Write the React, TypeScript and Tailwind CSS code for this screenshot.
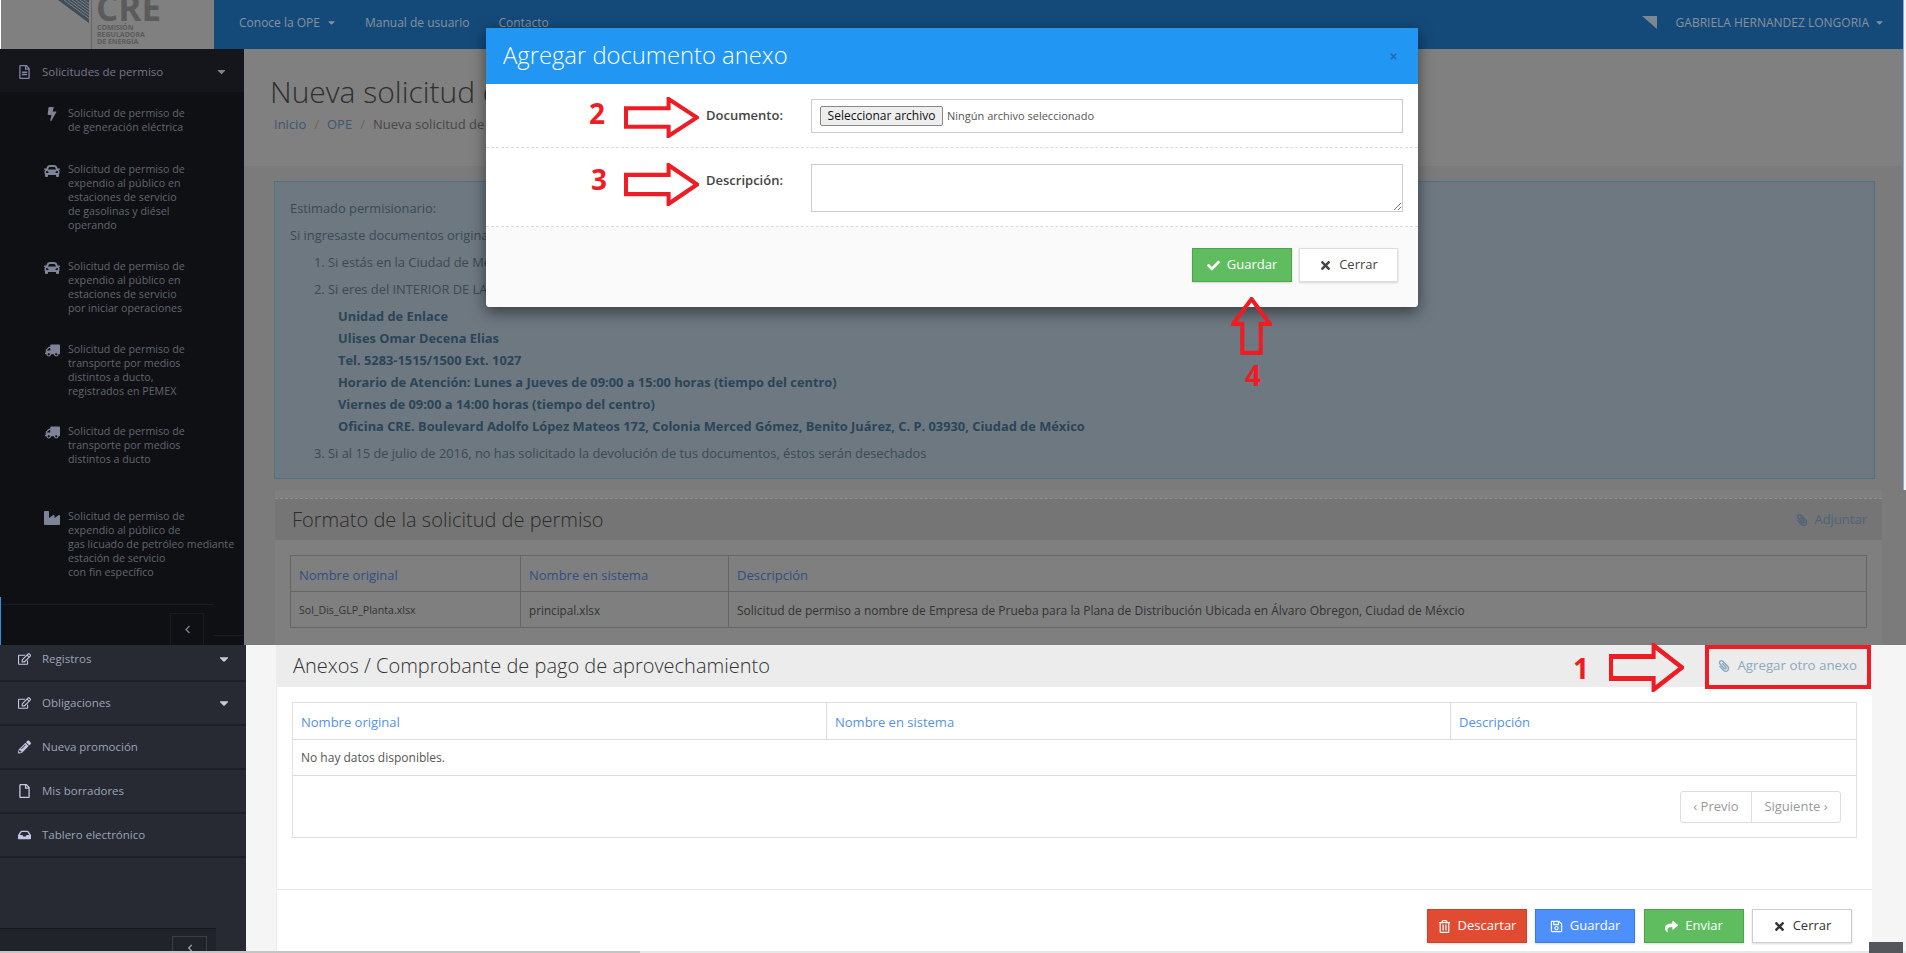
import React from "react";
import {
  FaBolt, FaCar, FaTruck, FaIndustry, FaRegFileAlt, FaRegEdit, FaPencilAlt, FaRegFile, FaInbox,
  FaCheck, FaTimes, FaRegTrashAlt, FaRegSave, FaShare, FaPaperclip, FaChevronLeft, FaCaretDown,
} from "react-icons/fa";

const font = { fontFamily: '"Open Sans", sans-serif' };

function Arrow({ className, dir = "right" }: { className: string; dir?: "right" | "up" }) {
  const pts = dir === "right" ? "2,11 44,11 44,2 72,20 44,38 44,29 2,29" : "20,2 38,26 29,26 29,54 11,54 11,26 2,26";
  const vb = dir === "right" ? "0 0 74 40" : "0 0 40 56";
  return (
    <svg viewBox={vb} className={`absolute ${className}`} preserveAspectRatio="none">
      <polygon points={pts} fill="none" stroke="#ee1c25" strokeWidth="4" />
    </svg>
  );
}

const topItems: { icon: React.ReactNode; lines: string[]; h: string }[] = [
  { icon: <FaBolt className="text-[14px]" />, lines: ["Solicitud de permiso de", "de generación eléctrica"], h: "h-[56px]" },
  { icon: <FaCar />, lines: ["Solicitud de permiso de", "expendio al público en", "estaciones de servicio", "de gasolinas y diésel", "operando"], h: "h-[97px]" },
  { icon: <FaCar />, lines: ["Solicitud de permiso de", "expendio al público en", "estaciones de servicio", "por iniciar operaciones"], h: "h-[83px]" },
  { icon: <FaTruck className="-scale-x-100 text-[15px]" />, lines: ["Solicitud de permiso de", "transporte por medios", "distintos a ducto,", "registrados en PEMEX"], h: "h-[82px]" },
  { icon: <FaTruck className="-scale-x-100 text-[15px]" />, lines: ["Solicitud de permiso de", "transporte por medios", "distintos a ducto"], h: "h-[85px]" },
  { icon: <FaIndustry />, lines: ["Solicitud de permiso de", "expendio al público de", "gas licuado de petróleo mediante", "estación de servicio", "con fin específico"], h: "h-[88px]" },
];

const bottomItems = [
  { icon: <FaRegEdit />, label: "Registros", caret: true },
  { icon: <FaRegEdit />, label: "Obligaciones", caret: true },
  { icon: <FaPencilAlt />, label: "Nueva promoción" },
  { icon: <FaRegFile />, label: "Mis borradores" },
  { icon: <FaInbox />, label: "Tablero electrónico" },
];

function Navbar() {
  return (
    <div className="flex h-[49px] shrink-0 overflow-hidden">
      <div className="w-px bg-white" />
      <div className="w-[213px] bg-[#808080] flex overflow-hidden">
        <svg viewBox="0 0 31 23" className="ml-[57px] w-[31px] h-[23px]">
          <polygon points="0,0 31,0 31,23" fill="#3f4d5a" />
          <path d="M6,0 L31,18.5 M10,0 L31,15.5 M14,0 L31,12.5 M18,0 L31,9.5 M22,0 L31,6.5 M26,0 L31,3.5" stroke="#808080" strokeWidth="1" />
        </svg>
        <div className="w-px h-full bg-[#666] ml-[2px]" />
        <div className="ml-[4px] flex flex-col text-[#5b5b5b] font-bold">
          <span className="text-[35px] leading-[27px] -mt-[6px]">CRE</span>
          <span className="text-[7px] leading-[7px] mt-[3px] ml-[1px]">COMISIÓN</span>
          <span className="text-[7px] leading-[7px] ml-[1px]">REGULADORA</span>
          <span className="text-[7px] leading-[7px] ml-[1px]">DE ENERGÍA</span>
        </div>
      </div>
      <div className="flex-1 bg-[#144a7a] flex items-center pl-[25px] pr-[21px] pb-[4px] text-[12px] text-[#8a9199]">
        <span className="flex items-center gap-[6px]">Conoce la OPE <FaCaretDown className="text-[11px]" /></span>
        <span className="ml-[28px]">Manual de usuario</span>
        <span className="ml-[29px]">Contacto</span>
        <svg viewBox="0 0 15 13" className="ml-auto w-[15px] h-[13px]">
          <polygon points="0,0 15,0 15,13" fill="#7b8791" />
        </svg>
        <span className="ml-[19px] flex items-center gap-[5px]">GABRIELA HERNANDEZ LONGORIA <FaCaretDown className="text-[11px]" /></span>
      </div>
    </div>
  );
}

function TopSidebar() {
  return (
    <div className="w-[244px] shrink-0 bg-[#0e1014] flex flex-col">
      <div className="h-[43px] shrink-0 bg-[#14161c] flex items-center pt-[2px] pl-[18px] pr-[16px] text-[11.5px] text-[#757985]">
        <FaRegFileAlt className="text-[14px] w-[13px] text-[#8186a0]" />
        <span className="ml-[11px]">Solicitudes de permiso</span>
        <FaCaretDown className="ml-auto text-[13px] text-[#80838c]" />
      </div>
      <div className="flex flex-col pt-[14px] flex-1">
        {topItems.map((it, i) => (
          <div key={i} className={`flex ${it.h} pl-[44px]`}>
            <div className="w-[16px] text-[16px] text-[#7e8397] flex justify-center pt-[1px] shrink-0">{it.icon}</div>
            <div className="ml-[8px] text-[10.7px] leading-[14px] text-[#62666f] whitespace-nowrap">
              {it.lines.map((l) => <div key={l}>{l}</div>)}
            </div>
          </div>
        ))}
      </div>
      <div className="h-[48px] shrink-0 relative border-l border-[#2e8fe8]">
        <div className="w-[213px] border-t border-[#1a1c20] mt-[7px]" />
        <div className="absolute left-[169px] top-[16px] w-[34px] h-[32px] border border-[#191b20] border-b-0 flex items-center justify-center text-[#7a7e86] text-[9px]">
          <FaChevronLeft />
        </div>
        <div className="absolute left-[213px] top-[38px] w-[30px] h-px bg-[#1a1c20]" />
      </div>
    </div>
  );
}

function DimTable() {
  const cols = ["w-[229px]", "w-[208px]", "flex-1"];
  const heads = ["Nombre original", "Nombre en sistema", "Descripción"];
  const cells = [
    { t: "Sol_Dis_GLP_Planta.xlsx", s: "text-[10.6px]" },
    { t: "principal.xlsx", s: "text-[11.7px]" },
    { t: "Solicitud de permiso a nombre de Empresa de Prueba para la Plana de Distribución Ubicada en Álvaro Obregon, Ciudad de Méxcio", s: "text-[12px]" },
  ];
  return (
    <div className="mx-[15px] mt-[15px] border border-[#666]">
      <div className="flex h-[36px] border-b border-[#666] text-[13px] text-[#2f4f80]">
        {heads.map((h, i) => <div key={h} className={`${cols[i]} ${i ? "border-l border-[#666]" : ""} flex items-center pl-[8px] pt-[4px]`}>{h}</div>)}
      </div>
      <div className="flex h-[35px] text-[#333]">
        {cells.map((c, i) => <div key={c.t} className={`${cols[i]} ${c.s} ${i ? "border-l border-[#666]" : ""} flex items-center pl-[8px] pt-[2px]`}>{c.t}</div>)}
      </div>
    </div>
  );
}

function TopMain() {
  const bold = ["Unidad de Enlace", "Ulises Omar Decena Elias", "Tel. 5283-1515/1500 Ext. 1027", "Horario de Atención: Lunes a Jueves de 09:00 a 15:00 horas (tiempo del centro)", "Viernes de 09:00 a 14:00 horas (tiempo del centro)", "Oficina CRE. Boulevard Adolfo López Mateos 172, Colonia Merced Gómez, Benito Juárez, C. P. 03930, Ciudad de México"];
  return (
    <div className="flex-1 min-w-0 bg-[#7b7b7b] flex flex-col">
      <div className="h-[117px] bg-[#808080] pl-[26px] shrink-0">
        <div className="text-[30px] leading-[40px] font-light text-[#2e2e2e] pt-[23px] h-[63px]">Nueva solicitud de</div>
        <div className="text-[13px] mt-[3px] ml-[4px] text-[#3e5670] flex gap-[8px]">
          <span>Inicio</span><span className="text-[#666]">/</span><span>OPE</span><span className="text-[#666]">/</span><span className="text-[#474747]">Nueva solicitud de</span>
        </div>
      </div>
      <div className="ml-[30px] mr-[31px] mt-[15px] h-[298px] bg-[#6e7880] border border-[#4f7185] pl-[15px] pt-[17px] text-[12.85px] text-[#3a4a55] shrink-0">
        <div className="h-[27px]">Estimado permisionario:</div>
        <div className="h-[27px]">Si ingresaste documentos originales</div>
        <div className="h-[27px] pl-[24px]">1. Si estás en la Ciudad de México</div>
        <div className="h-[27px] pl-[24px]">2. Si eres del INTERIOR DE LA REPÚBLICA</div>
        <div className="pl-[48px] font-bold text-[#2a4558] -mt-[2px]">
          {bold.map((b) => <div key={b} className="h-[22px] leading-[22px]">{b}</div>)}
        </div>
        <div className="h-[27px] pl-[24px] mt-[7px]">3. Si al 15 de julio de 2016, no has solicitado la devolución de tus documentos, éstos serán desechados</div>
      </div>
      <div className="ml-[31px] mr-[24px] mt-[11px] flex-1 bg-[#7f7f7f] flex flex-col">
        <div className="mt-[8px] h-[42px] bg-[#757575] border-t border-dashed border-[#8e8e8e] flex items-center pl-[17px] pr-[15px] shrink-0">
          <span className="text-[20px] font-light text-[#2b2b2b]">Formato de la solicitud de permiso</span>
          <span className="ml-auto flex items-center gap-[6px] text-[13px] text-[#4c6478]"><FaPaperclip className="text-[12px] -scale-x-100" /> Adjuntar</span>
        </div>
        <DimTable />
      </div>
    </div>
  );
}

function BottomSidebar() {
  return (
    <div className="w-[246px] shrink-0 bg-[#272a33] flex flex-col">
      {bottomItems.map((it, i) => (
        <div key={it.label} className={`h-[44px] ${i === 0 ? "-mt-[7px]" : ""} border-b-2 border-[#1e2027] flex items-center pl-[18px] pr-[15px] text-[11.5px] text-[#9da3b8] shrink-0`}>
          <span className="w-[13px] text-[14px] text-[#c3c8e0] flex justify-center">{it.icon}</span>
          <span className="ml-[11px]">{it.label}</span>
          {it.caret && <FaCaretDown className="ml-auto text-[14px] text-[#c8cbd6]" />}
        </div>
      ))}
      <div className="flex-1" />
      <div className="h-[23px] w-[216px] bg-[#20232a] border-t border-[#17181d] relative shrink-0">
        <div className="absolute left-[172px] top-[7px] w-[35px] h-[16px] border border-[#3b3e46] border-b-0 flex items-end justify-center text-[#aaa] text-[8px]">
          <FaChevronLeft />
        </div>
      </div>
    </div>
  );
}

function Btn({ cls, icon, label, w = "w-[100px]" }: { cls: string; icon: React.ReactNode; label: string; w?: string }) {
  return (
    <div className={`${w} h-[34px] border ${cls} flex items-center justify-center gap-[7px] text-[13px] shadow-[0_1px_2px_rgba(0,0,0,0.15)]`}>
      <span className="text-[13px]">{icon}</span>
      <span>{label}</span>
    </div>
  );
}

function BottomMain() {
  const col = ["w-[533px]", "w-[624px]", "flex-1"];
  const heads = ["Nombre original", "Nombre en sistema", "Descripción"];
  return (
    <div className="flex-1 min-w-0 bg-[#f5f5f5] pl-[30px] pr-[34px]">
      <div className="h-full bg-white flex flex-col border-l border-[#ececec]">
        <div className="h-[42px] bg-[#ececec] flex items-center pl-[16px] pr-[15px] shrink-0">
          <span className="text-[20px] font-light text-[#333]">Anexos / Comprobante de pago de aprovechamiento</span>
          <span className="ml-auto flex items-center gap-[7px] text-[13.3px] text-[#8ba9bf]"><FaPaperclip className="text-[12px] -scale-x-100" /> Agregar otro anexo</span>
        </div>
        <div className="mx-[15px] mt-[15px] h-[136px] border border-[#e0e0e0] shrink-0 text-[12px]">
          <div className="flex h-[37px] border-b border-[#ddd] text-[13px] text-[#5393e8]">
            {heads.map((h, i) => <div key={h} className={`${col[i]} ${i ? "border-l border-[#ddd]" : ""} flex items-center pl-[8px] pt-[3px]`}>{h}</div>)}
          </div>
          <div className="h-[36px] border-b border-[#ddd] flex items-center pl-[8px] text-[#555]">No hay datos disponibles.</div>
          <div className="flex justify-end pr-[15px] pt-[15px]">
            <div className="flex h-[32px] w-[161px] border border-[#ddd] rounded-[3px] text-[13px] text-[#999]">
              <div className="w-[71px] flex items-center justify-center border-r border-[#ddd]">‹ Previo</div>
              <div className="flex-1 flex items-center justify-center">Siguiente ›</div>
            </div>
          </div>
        </div>
        <div className="mt-[51px] border-t border-[#e8e8e8] pt-[19px] pr-[20px] flex justify-end shrink-0">
          <Btn cls="bg-[#e04b32] border-[#c9442d] text-white" icon={<FaRegTrashAlt />} label="Descartar" />
          <div className="w-[8px]" />
          <Btn cls="bg-[#4d8ffb] border-[#3a7ad8] text-white" icon={<FaRegSave />} label="Guardar" />
          <div className="w-[9px]" />
          <Btn cls="bg-[#5fbd60] border-[#4ca34d] text-white" icon={<FaShare />} label="Enviar" />
          <div className="w-[8px]" />
          <Btn cls="bg-white border-[#ccc] text-[#333]" icon={<FaTimes />} label="Cerrar" />
        </div>
      </div>
    </div>
  );
}

function Modal() {
  return (
    <div className="absolute left-[486px] top-[28px] w-[932px] h-[279px] bg-white rounded-b-[4px] shadow-[0_5px_15px_rgba(0,0,0,0.5)] flex flex-col overflow-hidden">
      <div className="h-[56px] bg-[#2196f3] flex items-center pl-[17px] pr-[20px] shrink-0">
        <span className="text-[23.8px] font-light text-white">Agregar documento anexo</span>
        <FaTimes className="ml-auto text-[9px] text-[#1a6fb5]" />
      </div>
      <div className="h-[64px] flex border-b border-dashed border-[#ddd] pt-[15px] shrink-0">
        <div className="w-[220px] pl-[220px] text-[13px] font-semibold text-[#444] pt-[7px] whitespace-nowrap">Documento:</div>
        <div className="ml-[105px] w-[592px] h-[34px] border border-[#ccc] flex items-center pl-[8px] text-[11px] text-[#555]">
          <span className="h-[20px] w-[123px] bg-[#eee] border border-[#888] rounded-[2px] flex items-center justify-center text-[#111] text-[12px]">Seleccionar archivo</span>
          <span className="ml-[4px]">Ningún archivo seleccionado</span>
        </div>
      </div>
      <div className="h-[79px] flex border-b border-dashed border-[#ddd] pt-[16px] shrink-0">
        <div className="w-[220px] pl-[220px] text-[13px] font-semibold text-[#444] pt-[7px] whitespace-nowrap">Descripción:</div>
        <div className="ml-[105px] w-[592px] h-[48px] border border-[#ccc] relative">
          <svg viewBox="0 0 8 8" className="absolute right-[1px] bottom-[1px] w-[8px] h-[8px]"><path d="M1,8 L8,1 M5,8 L8,5" stroke="#777" strokeWidth="1" /></svg>
        </div>
      </div>
      <div className="flex-1 bg-[#fafafa] flex justify-end gap-[7px] pr-[20px] pt-[21px]">
        <Btn w="w-[100px]" cls="bg-[#5fbd60] border-[#4ca34d] text-white" icon={<FaCheck />} label="Guardar" />
        <Btn w="w-[99px]" cls="bg-white border-[#ddd] text-[#444]" icon={<FaTimes />} label="Cerrar" />
      </div>
    </div>
  );
}

export default function App() {
  const num = "absolute text-[#ee1c25] font-bold text-[28px] leading-none";
  return (
    <div className="relative w-[1906px] h-[953px] overflow-hidden flex flex-col" style={font}>
      <div className="h-[645px] shrink-0 flex flex-col overflow-hidden">
        <Navbar />
        <div className="flex flex-1 min-h-0">
          <TopSidebar />
          <TopMain />
        </div>
      </div>
      <div className="h-[306px] shrink-0 flex overflow-hidden">
        <BottomSidebar />
        <BottomMain />
      </div>
      <div className="h-[2px] bg-[#e8e8e8] shrink-0"><div className="w-[640px] h-full bg-[#c4c4c4]" /></div>

      <Modal />
      <Arrow className="left-[624px] top-[97px] w-[75px] h-[41px]" />
      <Arrow className="left-[624px] top-[163px] w-[75px] h-[43px]" />
      <Arrow dir="up" className="left-[1231px] top-[297px] w-[41px] h-[58px]" />
      <Arrow className="left-[1609px] top-[643px] w-[75px] h-[49px]" />
      <span className={`${num} left-[589px] top-[99px]`}>2</span>
      <span className={`${num} left-[591px] top-[165px]`}>3</span>
      <span className={`${num} left-[1245px] top-[361px]`}>4</span>
      <span className={`${num} left-[1573px] top-[654px]`}>1</span>
      <div className="absolute left-[1705px] top-[645px] w-[166px] h-[44px] border-[4px] border-[#ee1c25]" />
      <div className="absolute left-[1869px] top-[942px] w-[34px] h-[11px] bg-[#55565b]" />
      <div className="absolute left-[1903px] top-0 w-[3px] h-[490px] border-l border-[#8aa8d8] bg-[#f2f2f2]" />
    </div>
  );
}
